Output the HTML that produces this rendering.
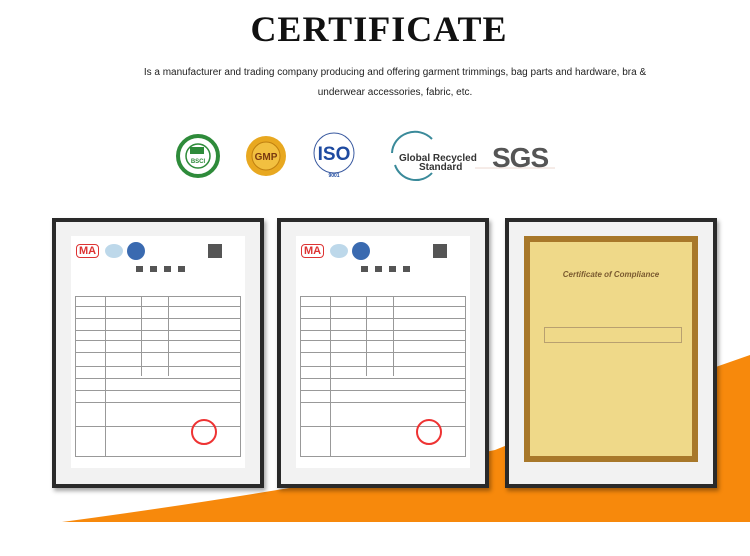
<!DOCTYPE html>
<html><head><meta charset="utf-8"><style>
body{margin:0;width:750px;height:556px;background:#fff;position:relative;overflow:hidden;font-family:"Liberation Sans",sans-serif}
h1{position:absolute;top:8px;left:4px;width:750px;text-align:center;margin:0;font-family:"Liberation Serif",serif;font-weight:bold;font-size:36px;letter-spacing:1px;color:#111}
.p{position:absolute;left:20px;width:750px;text-align:center;font-size:10px;color:#222}
.frame{position:absolute;top:218px;width:204px;height:262px;border:4px solid #2a2a2a;background:#f2f2f2;box-shadow:2px 3px 4px rgba(0,0,0,.35)}
.paper{position:absolute;left:15px;top:14px;right:15px;bottom:16px;background:#fff}
.row{position:absolute;left:4px;right:4px;height:1px;background:#999}
.col{position:absolute;width:1px;background:#999}
.gold{position:absolute;left:15px;top:14px;right:15px;bottom:22px;background:#efd989;border:6px solid #a8782a;box-sizing:border-box}
</style></head><body>
<svg style="position:absolute;left:0;top:0" width="750" height="556">
<path d="M62 522 Q300 490 495 450 Q620 400 750 355 L750 522 Z" fill="#f7890c"/>
</svg>
<h1>CERTIFICATE</h1>
<div class="p" style="top:67px">Is a manufacturer and trading company producing and offering garment trimmings, bag parts and hardware, bra &amp;</div>
<div class="p" style="top:87px">underwear accessories, fabric, etc.</div>
<svg style="position:absolute;left:170px;top:125px" width="400" height="70">
<circle cx="28" cy="31" r="20" fill="#fff" stroke="#2e8b3a" stroke-width="4"/><circle cx="28" cy="31" r="12" fill="#fff" stroke="#2e8b3a" stroke-width="1.5"/>
<rect x="20" y="22" width="14" height="7" fill="#2e8b3a"/><text x="28" y="38" font-size="6" text-anchor="middle" fill="#2e8b3a" font-weight="bold">BSCI</text>
<circle cx="96" cy="31" r="20" fill="#e8a820"/><circle cx="96" cy="31" r="14" fill="#f2c040" stroke="#c08010"/>
<text x="96" y="35" font-size="10" text-anchor="middle" fill="#7a3a10" font-weight="bold">GMP</text>
<circle cx="164" cy="28" r="20" fill="none" stroke="#3a5aa0" stroke-width="1"/>
<text x="164" y="35" font-size="19" text-anchor="middle" fill="#1e4aa0" font-weight="bold">ISO</text>
<text x="164" y="52" font-size="5" text-anchor="middle" fill="#1e4aa0" font-weight="bold">9001</text>
<path d="M222 28 A23 22 0 0 1 262 14" fill="none" stroke="#3a8a9a" stroke-width="2"/>
<path d="M225 40 A22 22 0 0 0 262 48" fill="none" stroke="#3a8a9a" stroke-width="2"/>
<text x="229" y="36" font-size="10" font-weight="bold" fill="#333">Global Recycled</text><text x="249" y="45" font-size="10" font-weight="bold" fill="#333">Standard</text>
<text x="322" y="42" font-size="28" fill="#555" font-weight="bold" letter-spacing="-1">SGS</text>
<line x1="305" y1="43" x2="385" y2="43" stroke="#d8b0a0" stroke-width="0.5"/>
</svg>
<div class="frame" style="left:52px"><div class="paper">
<div style="position:absolute;left:5px;top:8px;color:#d33;font-size:11px;font-weight:bold;border:1px solid #d33;border-radius:4px;padding:0 2px">MA</div>
<div style="position:absolute;left:34px;top:8px;width:18px;height:14px;border-radius:50%;background:#bdd8ea"></div>
<div style="position:absolute;left:56px;top:6px;width:18px;height:18px;border-radius:50%;background:#3a6ab0"></div>
<div style="position:absolute;left:137px;top:8px;width:14px;height:14px;background:#555"></div>
<div style="position:absolute;left:65px;top:30px;width:50px;height:6px;background:repeating-linear-gradient(90deg,#555 0 7px,transparent 7px 14px)"></div>
<div class="row" style="top:60px"></div><div class="row" style="top:70px"></div><div class="row" style="top:82px"></div><div class="row" style="top:94px"></div><div class="row" style="top:104px"></div><div class="row" style="top:116px"></div><div class="row" style="top:130px"></div><div class="row" style="top:142px"></div><div class="row" style="top:154px"></div><div class="row" style="top:166px"></div><div class="row" style="top:190px"></div><div class="row" style="top:220px"></div>
<div class="col" style="left:4px;top:60px;height:160px"></div><div class="col" style="left:34px;top:60px;height:160px"></div><div class="col" style="left:70px;top:60px;height:80px"></div><div class="col" style="left:97px;top:60px;height:80px"></div><div class="col" style="right:4px;top:60px;height:160px"></div>
<div style="position:absolute;left:120px;top:183px;width:26px;height:26px;border-radius:50%;border:2px solid #e33;box-sizing:border-box"></div>
</div></div>
<div class="frame" style="left:277px"><div class="paper">
<div style="position:absolute;left:5px;top:8px;color:#d33;font-size:11px;font-weight:bold;border:1px solid #d33;border-radius:4px;padding:0 2px">MA</div>
<div style="position:absolute;left:34px;top:8px;width:18px;height:14px;border-radius:50%;background:#bdd8ea"></div>
<div style="position:absolute;left:56px;top:6px;width:18px;height:18px;border-radius:50%;background:#3a6ab0"></div>
<div style="position:absolute;left:137px;top:8px;width:14px;height:14px;background:#555"></div>
<div style="position:absolute;left:65px;top:30px;width:50px;height:6px;background:repeating-linear-gradient(90deg,#555 0 7px,transparent 7px 14px)"></div>
<div class="row" style="top:60px"></div><div class="row" style="top:70px"></div><div class="row" style="top:82px"></div><div class="row" style="top:94px"></div><div class="row" style="top:104px"></div><div class="row" style="top:116px"></div><div class="row" style="top:130px"></div><div class="row" style="top:142px"></div><div class="row" style="top:154px"></div><div class="row" style="top:166px"></div><div class="row" style="top:190px"></div><div class="row" style="top:220px"></div>
<div class="col" style="left:4px;top:60px;height:160px"></div><div class="col" style="left:34px;top:60px;height:160px"></div><div class="col" style="left:70px;top:60px;height:80px"></div><div class="col" style="left:97px;top:60px;height:80px"></div><div class="col" style="right:4px;top:60px;height:160px"></div>
<div style="position:absolute;left:120px;top:183px;width:26px;height:26px;border-radius:50%;border:2px solid #e33;box-sizing:border-box"></div>
</div></div>
<div class="frame" style="left:505px"><div class="gold">
<div style="position:absolute;left:0;right:0;top:28px;text-align:center;font-size:8px;font-style:italic;font-weight:bold;color:#7a5a30">Certificate of Compliance</div>
<div style="position:absolute;left:14px;right:10px;top:85px;height:14px;border:1px solid #b8a070"></div>
</div></div>
</body></html>
